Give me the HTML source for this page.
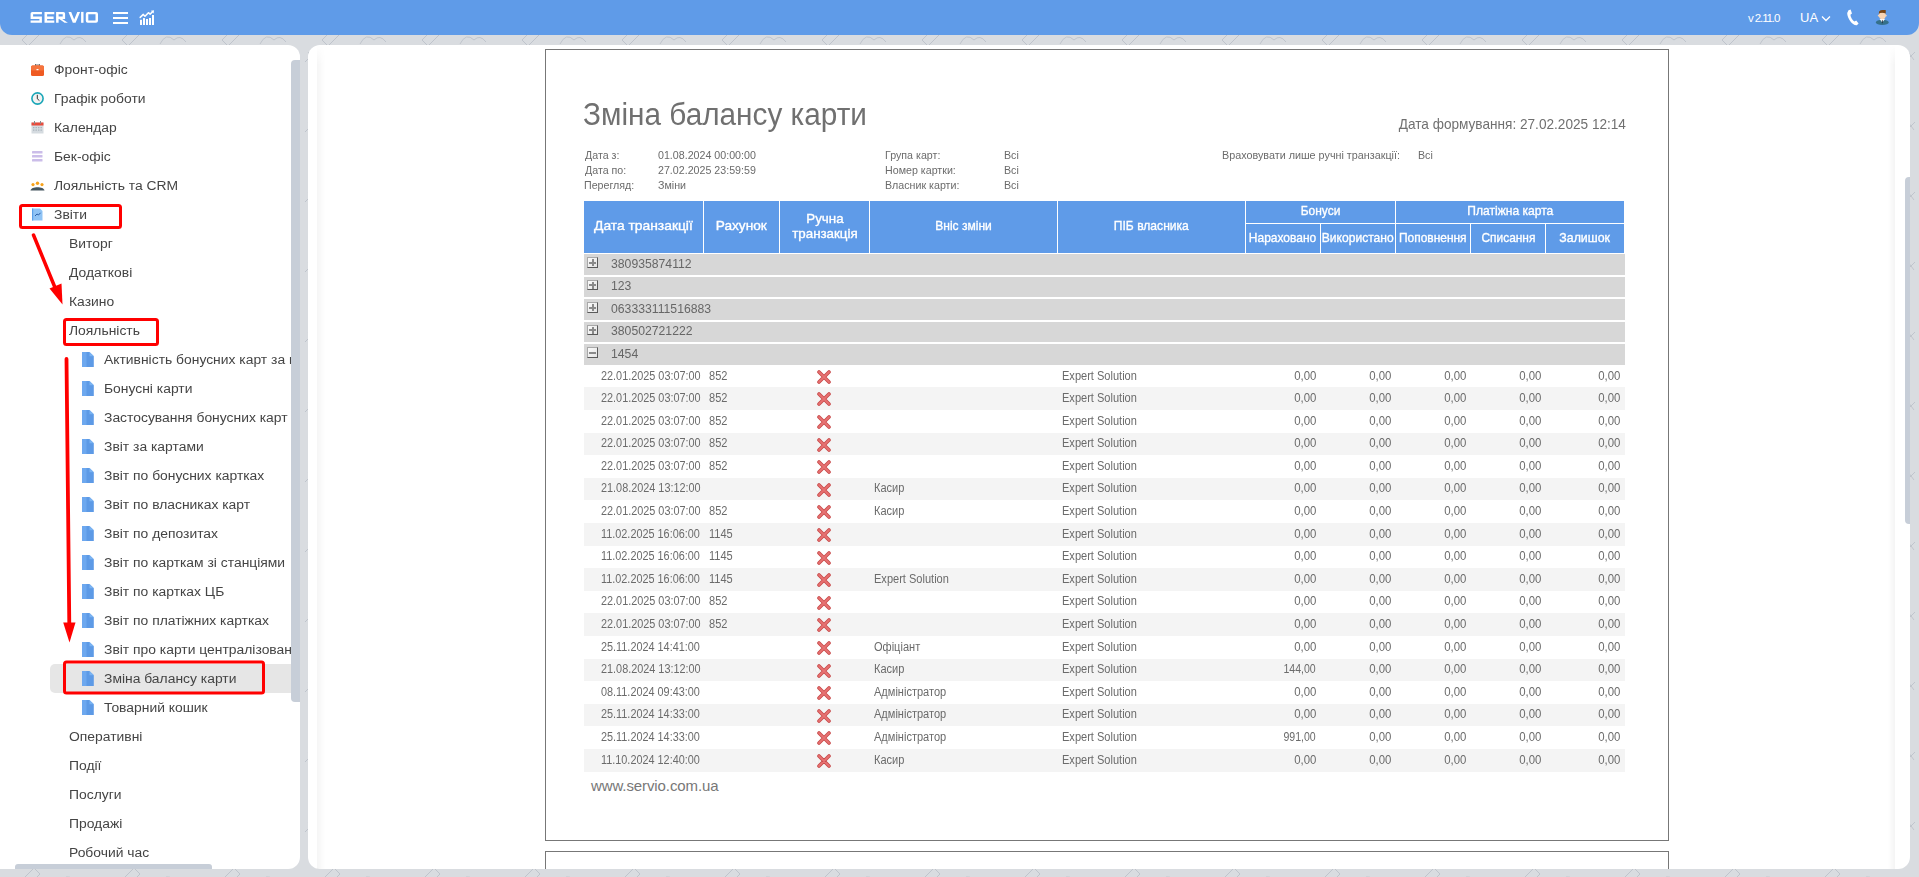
<!DOCTYPE html>
<html><head><meta charset="utf-8"><title>Servio</title>
<style>
*{box-sizing:border-box;margin:0;padding:0}
html,body{width:1919px;height:877px;overflow:hidden}
body{position:relative;background:#d9dce0;font-family:"Liberation Sans", sans-serif;}
.a{position:absolute}
.hdr{left:0;top:0;width:1919px;height:35px;background:#5f9be8;border-radius:0 0 12px 12px}
.side{left:0;top:45px;width:300px;height:824px;background:#fff;border-radius:0 12px 12px 0;overflow:hidden}
.main{left:308px;top:45px;width:1602px;height:824px;background:#fff;border-radius:12px;overflow:hidden}
.mi{position:absolute;height:29px;line-height:29px;font-size:12.5px;color:#444;transform:scaleX(1.11);transform-origin:left;white-space:nowrap}
.rt{position:absolute;white-space:nowrap;color:#6f6f6f}
.hc{position:absolute;background:#5f9be8;color:#fff;font-weight:normal;-webkit-text-stroke:0.35px #fff;font-size:13px;text-align:center;display:flex;align-items:center;justify-content:center;line-height:15px}
.hc span{display:inline-block;white-space:nowrap;position:relative;top:-1.5px}
.gr{position:absolute;left:584px;width:1041px;height:20.6px;background:#d7d7d7}
.dr{position:absolute;left:584px;width:1041px;height:22.6px}
.dt{position:absolute;font-size:12px;color:#6b6b6b;white-space:nowrap;line-height:14px}
</style></head><body>

<svg class="a" style="left:0;top:0" width="1919" height="877"><defs><pattern id="pt" x="0" y="0" width="100" height="70" patternUnits="userSpaceOnUse">
<g fill="none" stroke="#aab1bb" stroke-width="1" opacity="0.55">
<circle cx="28" cy="8" r="6"/><path d="M22 40 L34 28 L40 34 L28 46 Z"/><path d="M70 2 L82 14 M76 8 L86 -2"/><path d="M60 44 Q66 32 74 40 Q80 34 86 42"/><path d="M5 62 L15 52 M8 52 L14 60"/>
</g></pattern></defs><rect width="1919" height="877" fill="url(#pt)"/></svg>
<div class="a hdr"></div>
<svg class="a" style="left:0;top:0" width="110" height="35" viewBox="0 0 110 35"><g fill="#fff">
<path d="M32.3 11.9 L41.9 11.9 L41.9 14.3 L33.1 14.3 L33.1 16.4 L41.9 16.4 L41.9 22.8 L30.6 22.8 L30.6 20.4 L39.4 20.4 L39.4 18.9 L30.6 18.9 L30.6 13.6 Q30.6 11.9 32.3 11.9 Z"/>
<path d="M44.5 11.9 L54.3 11.9 L54.3 14.3 L47.1 14.3 L47.1 16.4 L53.6 16.4 L53.6 18.9 L47.1 18.9 L47.1 20.4 L54.3 20.4 L54.3 22.8 L44.5 22.8 Z"/>
<path d="M56.1 11.9 L63.4 11.9 Q65.1 11.9 65.1 13.6 L65.1 18.9 L62.2 18.9 L67.9 22.8 L64.6 22.8 L59.2 18.9 L58.6 18.9 L58.6 22.8 L56.1 22.8 Z M58.6 14.3 L58.6 16.4 L62.7 16.4 L62.7 14.3 Z"/>
<path d="M68.5 11.9 L71.2 11.9 L74.2 19.6 L77.3 11.9 L80.1 11.9 L75.6 22.8 L72.8 22.8 Z"/>
<rect x="81.1" y="11.9" width="2.4" height="10.9"/>
<path fill-rule="evenodd" d="M87.8 11.9 L96 11.9 Q98 11.9 98 13.9 L98 20.8 Q98 22.8 96 22.8 L87.8 22.8 Q85.8 22.8 85.8 20.8 L85.8 13.9 Q85.8 11.9 87.8 11.9 Z M88.3 14.3 L88.3 20.4 L95.5 20.4 L95.5 14.3 Z"/>
</g></svg>
<div class="a" style="left:113px;top:12px;width:15px;height:2px;background:#fff"></div>
<div class="a" style="left:113px;top:17px;width:15px;height:2px;background:#fff"></div>
<div class="a" style="left:113px;top:22px;width:15px;height:2px;background:#fff"></div>
<svg class="a" style="left:135px;top:5px" width="25" height="25" viewBox="0 0 25 25"><g fill="#fff">
<rect x="5" y="14.8" width="2" height="5.2"/><rect x="8" y="13.1" width="2" height="6.9"/><rect x="11" y="14" width="2" height="6"/><rect x="14" y="13" width="2" height="7"/><rect x="17" y="10" width="2" height="10"/>
<polygon points="19,5.2 15.8,5.8 18.6,8.6"/></g>
<polyline points="5.2,12.4 8.3,9.4 10,11.2 13.4,7.7 15.1,9.1 17.6,6.7" fill="none" stroke="#fff" stroke-width="1.5" stroke-linejoin="round" stroke-linecap="round"/></svg>
<div class="a" style="left:1748px;top:11px;font-size:11.5px;color:#fff;line-height:15px;letter-spacing:-1.1px">v 2.11.0</div>
<div class="a" style="left:1800px;top:10px;font-size:13px;color:#fff;line-height:16px">UA</div>
<svg class="a" style="left:1821px;top:15px" width="10" height="7" viewBox="0 0 10 7"><polyline points="1,1.5 5,5.5 9,1.5" fill="none" stroke="#fff" stroke-width="1.3"/></svg>
<svg class="a" style="left:1846px;top:9px" width="13" height="17" viewBox="0 0 13 17"><path d="M2.5 1.2 L4.6 0.6 L6 4.6 L4.4 5.8 C4.6 8.4 6.6 11.6 8.6 12.6 L10.2 11.4 L12.6 14.6 L10.8 16.2 C6.2 16.6 1.2 9 1.2 4 Z" fill="#fff"/></svg>
<svg class="a" style="left:1874px;top:9px" width="16" height="17" viewBox="0 0 16 17">
<ellipse cx="8.3" cy="13.4" rx="6.4" ry="2.6" fill="#35708a"/>
<path d="M5.6 10 L8.3 13.4 L11 10 Z" fill="#fff"/>
<rect x="7.9" y="11.2" width="0.9" height="3" fill="#1e2a3a"/>
<circle cx="4.7" cy="6.6" r="0.9" fill="#f8d4b4"/><circle cx="11.9" cy="6.6" r="0.9" fill="#f8d4b4"/>
<path d="M4.9 5 Q4.9 3.4 8.3 3.4 Q11.7 3.4 11.7 5 L11.7 7.4 Q11.5 9.6 8.3 10.6 Q5.1 9.6 4.9 7.4 Z" fill="#f8d4b4"/>
<path d="M4.8 5 L5.1 2.4 Q6.4 0.9 9 1 L11.7 1.1 L11.8 4.4 Q9 3.3 6 3.9 Z" fill="#7b4513"/>
</svg>
<div class="a side"></div>
<div class="a" style="left:0;top:0;width:291px;height:869px;overflow:hidden">
<div class="a" style="left:50px;top:664px;width:250px;height:29px;background:#e6e6e6;border-radius:5px 0 0 5px"></div>
<div class="mi" style="left:54.3px;top:56.1px">Фронт-офіс</div>
<svg class="a" style="left:31px;top:64px" width="13" height="12" viewBox="0 0 13 12"><rect x="4.5" y="0" width="4" height="2" fill="none" stroke="#555" stroke-width="0.8"/><rect x="0" y="1.5" width="13" height="10.5" rx="1.5" fill="#ef5a22"/><rect x="0" y="1.5" width="13" height="5" rx="1.5" fill="#f5743d"/><rect x="5.5" y="5" width="2" height="1.2" fill="#fff"/></svg>
<div class="mi" style="left:54.3px;top:85.1px">Графік роботи</div>
<svg class="a" style="left:31px;top:91.5px" width="13" height="13" viewBox="0 0 13 13"><circle cx="6.5" cy="6.5" r="5.6" fill="#f2f2f2" stroke="#1aa6b7" stroke-width="1.6"/><polyline points="6.3,2.8 6.3,6.8 8.4,8.6" fill="none" stroke="#333" stroke-width="1"/></svg>
<div class="mi" style="left:54.3px;top:114.1px">Календар</div>
<svg class="a" style="left:31px;top:120.5px" width="13" height="13" viewBox="0 0 13 13"><rect x="0.5" y="1.5" width="12" height="11" fill="#d5dbe0"/><rect x="0.5" y="1.5" width="12" height="3" fill="#e84c3d"/><rect x="3" y="0" width="1" height="3" fill="#888"/><rect x="9" y="0" width="1" height="3" fill="#888"/><g fill="#a9b3bb"><rect x="2" y="6" width="1.4" height="1.2"/><rect x="4.5" y="6" width="1.4" height="1.2"/><rect x="7" y="6" width="1.4" height="1.2"/><rect x="9.5" y="6" width="1.4" height="1.2"/><rect x="2" y="8.5" width="1.4" height="1.2"/><rect x="4.5" y="8.5" width="1.4" height="1.2"/><rect x="7" y="8.5" width="1.4" height="1.2"/><rect x="9.5" y="8.5" width="1.4" height="1.2"/></g></svg>
<div class="mi" style="left:54.3px;top:143.1px">Бек-офіс</div>
<svg class="a" style="left:32px;top:151px" width="11" height="11" viewBox="0 0 11 11"><rect x="0" y="0" width="10.5" height="2.6" rx="0.6" fill="#cbbde9"/><rect x="0" y="4" width="10.5" height="2.6" rx="0.6" fill="#cbbde9"/><rect x="0" y="8" width="10.5" height="2.6" rx="0.6" fill="#cbbde9"/></svg>
<div class="mi" style="left:54.3px;top:172.1px">Лояльність та CRM</div>
<svg class="a" style="left:30px;top:181px" width="15" height="10" viewBox="0 0 15 10"><path d="M0.5 9.5 C1 5 14 5 14.5 9.5 Z" fill="#44555f"/><circle cx="3" cy="3.6" r="1.6" fill="#f7a21b"/><circle cx="7.5" cy="2.2" r="1.7" fill="#f7a21b"/><circle cx="12" cy="3.6" r="1.6" fill="#f7a21b"/></svg>
<div class="mi" style="left:54.3px;top:201.1px">Звіти</div>
<svg class="a" style="left:32px;top:208px" width="11" height="13" viewBox="0 0 11 13"><path d="M0 0.5 L8 0.5 L10.5 3 L10.5 12.5 L0 12.5 Z" fill="#8fc3f5"/><rect x="0" y="0.5" width="1.2" height="12" fill="#5aa0ea"/><polyline points="3,8 5,6 6.5,7 8.5,4.8" fill="none" stroke="#2a5fa8" stroke-width="1"/></svg>
<div class="mi" style="left:69.3px;top:230.1px">Виторг</div>
<div class="mi" style="left:69.3px;top:259.1px">Додаткові</div>
<div class="mi" style="left:69.3px;top:288.1px">Казино</div>
<div class="mi" style="left:69.3px;top:317.1px">Лояльність</div>
<div class="mi" style="left:104.3px;top:346.1px">Активність бонусних карт за період</div>
<svg class="a" style="left:82px;top:352px" width="12" height="15" viewBox="0 0 12 15"><path d="M0 0 L7.5 0 L11.8 4.3 L11.8 15 L0 15 Z" fill="#5d9ae6"/><rect x="0" y="0" width="4.5" height="15" fill="#6da8ef"/><path d="M7.5 0 L11.8 4.3 L7.5 4.3 Z" fill="#7ab3f2"/></svg>
<div class="mi" style="left:104.3px;top:375.1px">Бонусні карти</div>
<svg class="a" style="left:82px;top:381px" width="12" height="15" viewBox="0 0 12 15"><path d="M0 0 L7.5 0 L11.8 4.3 L11.8 15 L0 15 Z" fill="#5d9ae6"/><rect x="0" y="0" width="4.5" height="15" fill="#6da8ef"/><path d="M7.5 0 L11.8 4.3 L7.5 4.3 Z" fill="#7ab3f2"/></svg>
<div class="mi" style="left:104.3px;top:404.1px">Застосування бонусних карт с</div>
<svg class="a" style="left:82px;top:410px" width="12" height="15" viewBox="0 0 12 15"><path d="M0 0 L7.5 0 L11.8 4.3 L11.8 15 L0 15 Z" fill="#5d9ae6"/><rect x="0" y="0" width="4.5" height="15" fill="#6da8ef"/><path d="M7.5 0 L11.8 4.3 L7.5 4.3 Z" fill="#7ab3f2"/></svg>
<div class="mi" style="left:104.3px;top:433.1px">Звіт за картами</div>
<svg class="a" style="left:82px;top:439px" width="12" height="15" viewBox="0 0 12 15"><path d="M0 0 L7.5 0 L11.8 4.3 L11.8 15 L0 15 Z" fill="#5d9ae6"/><rect x="0" y="0" width="4.5" height="15" fill="#6da8ef"/><path d="M7.5 0 L11.8 4.3 L7.5 4.3 Z" fill="#7ab3f2"/></svg>
<div class="mi" style="left:104.3px;top:462.1px">Звіт по бонусних картках</div>
<svg class="a" style="left:82px;top:468px" width="12" height="15" viewBox="0 0 12 15"><path d="M0 0 L7.5 0 L11.8 4.3 L11.8 15 L0 15 Z" fill="#5d9ae6"/><rect x="0" y="0" width="4.5" height="15" fill="#6da8ef"/><path d="M7.5 0 L11.8 4.3 L7.5 4.3 Z" fill="#7ab3f2"/></svg>
<div class="mi" style="left:104.3px;top:491.1px">Звіт по власниках карт</div>
<svg class="a" style="left:82px;top:497px" width="12" height="15" viewBox="0 0 12 15"><path d="M0 0 L7.5 0 L11.8 4.3 L11.8 15 L0 15 Z" fill="#5d9ae6"/><rect x="0" y="0" width="4.5" height="15" fill="#6da8ef"/><path d="M7.5 0 L11.8 4.3 L7.5 4.3 Z" fill="#7ab3f2"/></svg>
<div class="mi" style="left:104.3px;top:520.1px">Звіт по депозитах</div>
<svg class="a" style="left:82px;top:526px" width="12" height="15" viewBox="0 0 12 15"><path d="M0 0 L7.5 0 L11.8 4.3 L11.8 15 L0 15 Z" fill="#5d9ae6"/><rect x="0" y="0" width="4.5" height="15" fill="#6da8ef"/><path d="M7.5 0 L11.8 4.3 L7.5 4.3 Z" fill="#7ab3f2"/></svg>
<div class="mi" style="left:104.3px;top:549.1px">Звіт по карткам зі станціями</div>
<svg class="a" style="left:82px;top:555px" width="12" height="15" viewBox="0 0 12 15"><path d="M0 0 L7.5 0 L11.8 4.3 L11.8 15 L0 15 Z" fill="#5d9ae6"/><rect x="0" y="0" width="4.5" height="15" fill="#6da8ef"/><path d="M7.5 0 L11.8 4.3 L7.5 4.3 Z" fill="#7ab3f2"/></svg>
<div class="mi" style="left:104.3px;top:578.1px">Звіт по картках ЦБ</div>
<svg class="a" style="left:82px;top:584px" width="12" height="15" viewBox="0 0 12 15"><path d="M0 0 L7.5 0 L11.8 4.3 L11.8 15 L0 15 Z" fill="#5d9ae6"/><rect x="0" y="0" width="4.5" height="15" fill="#6da8ef"/><path d="M7.5 0 L11.8 4.3 L7.5 4.3 Z" fill="#7ab3f2"/></svg>
<div class="mi" style="left:104.3px;top:607.1px">Звіт по платіжних картках</div>
<svg class="a" style="left:82px;top:613px" width="12" height="15" viewBox="0 0 12 15"><path d="M0 0 L7.5 0 L11.8 4.3 L11.8 15 L0 15 Z" fill="#5d9ae6"/><rect x="0" y="0" width="4.5" height="15" fill="#6da8ef"/><path d="M7.5 0 L11.8 4.3 L7.5 4.3 Z" fill="#7ab3f2"/></svg>
<div class="mi" style="left:104.3px;top:636.1px">Звіт про карти централізованого</div>
<svg class="a" style="left:82px;top:642px" width="12" height="15" viewBox="0 0 12 15"><path d="M0 0 L7.5 0 L11.8 4.3 L11.8 15 L0 15 Z" fill="#5d9ae6"/><rect x="0" y="0" width="4.5" height="15" fill="#6da8ef"/><path d="M7.5 0 L11.8 4.3 L7.5 4.3 Z" fill="#7ab3f2"/></svg>
<div class="mi" style="left:104.3px;top:665.1px">Зміна балансу карти</div>
<svg class="a" style="left:82px;top:671px" width="12" height="15" viewBox="0 0 12 15"><path d="M0 0 L7.5 0 L11.8 4.3 L11.8 15 L0 15 Z" fill="#5d9ae6"/><rect x="0" y="0" width="4.5" height="15" fill="#6da8ef"/><path d="M7.5 0 L11.8 4.3 L7.5 4.3 Z" fill="#7ab3f2"/></svg>
<div class="mi" style="left:104.3px;top:694.1px">Товарний кошик</div>
<svg class="a" style="left:82px;top:700px" width="12" height="15" viewBox="0 0 12 15"><path d="M0 0 L7.5 0 L11.8 4.3 L11.8 15 L0 15 Z" fill="#5d9ae6"/><rect x="0" y="0" width="4.5" height="15" fill="#6da8ef"/><path d="M7.5 0 L11.8 4.3 L7.5 4.3 Z" fill="#7ab3f2"/></svg>
<div class="mi" style="left:69.3px;top:723.1px">Оперативні</div>
<div class="mi" style="left:69.3px;top:752.1px">Події</div>
<div class="mi" style="left:69.3px;top:781.1px">Послуги</div>
<div class="mi" style="left:69.3px;top:810.1px">Продажі</div>
<div class="mi" style="left:69.3px;top:839.1px">Робочий час</div>
</div>
<div class="a" style="left:291px;top:60px;width:9px;height:642px;background:#c7ced8;border-radius:4px 0 0 4px"></div>
<div class="a" style="left:15px;top:864px;width:197px;height:5px;background:#c7ced8;border-radius:3px 3px 0 0"></div>
<svg class="a" style="left:0;top:0" width="300" height="877" viewBox="0 0 300 877">
<g fill="none" stroke="#ff0000" stroke-width="3">
<rect x="20.5" y="205.5" width="100" height="22" rx="2"/>
<rect x="64.5" y="319.5" width="93" height="25" rx="2"/>
<rect x="64.5" y="662" width="199" height="31" rx="2"/>
</g>
<line x1="33.5" y1="235" x2="56" y2="290" stroke="#ff0000" stroke-width="3.5" stroke-linecap="round"/>
<polygon points="49.5,288.5 61.5,283.5 62.5,304.5" fill="#ff0000"/>
<line x1="66.5" y1="359" x2="69.3" y2="625" stroke="#ff0000" stroke-width="3.8" stroke-linecap="round"/>
<polygon points="63.2,622.5 75.5,622.5 69.5,642.5" fill="#ff0000"/>
</svg>
<div class="a main"></div>
<div class="a" style="left:317px;top:45px;width:8px;height:824px;background:linear-gradient(to right,rgba(0,0,0,0.04),rgba(0,0,0,0));-webkit-mask-image:linear-gradient(transparent,#000 20px)"></div>
<div class="a" style="left:1888px;top:45px;width:7px;height:824px;background:linear-gradient(to left,rgba(0,0,0,0.045),rgba(0,0,0,0));-webkit-mask-image:linear-gradient(transparent,#000 20px)"></div>
<div class="a" style="left:1905px;top:177px;width:5px;height:347px;background:#c7ced8;border-radius:4px 0 0 4px"></div>
<div class="a" style="left:545px;top:49px;width:1124px;height:792px;border:1px solid #777;background:#fff"></div>
<div class="a" style="left:545px;top:851px;width:1124px;height:18px;border:1px solid #777;border-bottom:none;background:#fff"></div>
<div class="rt" style="left:583px;top:98px;font-size:30.8px;line-height:34px;color:#707070;transform:scaleX(0.966);transform-origin:left">Зміна балансу карти</div>
<div class="rt" style="left:1325.5px;top:115.7px;font-size:14.8px;line-height:17px;color:#707070;width:300px;text-align:right"><span style="display:inline-block;transform:scaleX(0.92);transform-origin:right">Дата формування: 27.02.2025 12:14</span></div>
<div class="dt" style="left:585px;top:148px;transform:scaleX(0.92);transform-origin:left;font-size:11.6px;color:#6b6b6b">Дата з:</div>
<div class="dt" style="left:658px;top:148px;transform:scaleX(0.92);transform-origin:left;font-size:11.6px;color:#6b6b6b">01.08.2024 00:00:00</div>
<div class="dt" style="left:585px;top:163px;transform:scaleX(0.92);transform-origin:left;font-size:11.6px;color:#6b6b6b">Дата по:</div>
<div class="dt" style="left:658px;top:163px;transform:scaleX(0.92);transform-origin:left;font-size:11.6px;color:#6b6b6b">27.02.2025 23:59:59</div>
<div class="dt" style="left:584px;top:178px;transform:scaleX(0.92);transform-origin:left;font-size:11.6px;color:#6b6b6b">Перегляд:</div>
<div class="dt" style="left:658px;top:178px;transform:scaleX(0.92);transform-origin:left;font-size:11.6px;color:#6b6b6b">Зміни</div>
<div class="dt" style="left:885px;top:148px;transform:scaleX(0.92);transform-origin:left;font-size:11.6px">Група карт:</div>
<div class="dt" style="left:1004px;top:148px;transform:scaleX(0.92);transform-origin:left;font-size:11.6px">Всі</div>
<div class="dt" style="left:885px;top:163px;transform:scaleX(0.92);transform-origin:left;font-size:11.6px">Номер картки:</div>
<div class="dt" style="left:1004px;top:163px;transform:scaleX(0.92);transform-origin:left;font-size:11.6px">Всі</div>
<div class="dt" style="left:885px;top:178px;transform:scaleX(0.92);transform-origin:left;font-size:11.6px">Власник карти:</div>
<div class="dt" style="left:1004px;top:178px;transform:scaleX(0.92);transform-origin:left;font-size:11.6px">Всі</div>
<div class="dt" style="left:1222px;top:148px;transform:scaleX(0.93);transform-origin:left;font-size:11.6px">Враховувати лише ручні транзакції:</div>
<div class="dt" style="left:1418px;top:148px;transform:scaleX(0.92);transform-origin:left;font-size:11.6px">Всі</div>
<div class="hc" style="left:584px;top:201px;width:119px;height:52px"><span style="transform:scaleX(1.064)">Дата транзакції</span></div>
<div class="hc" style="left:704px;top:201px;width:75px;height:52px"><span style="transform:scaleX(1.05)">Рахунок</span></div>
<div class="hc" style="left:780px;top:201px;width:89px;height:52px"><span style="transform:scaleX(1.025)">Ручна<br>транзакція</span></div>
<div class="hc" style="left:870px;top:201px;width:187px;height:52px"><span style="transform:scaleX(0.925)">Вніс зміни</span></div>
<div class="hc" style="left:1058px;top:201px;width:187px;height:52px"><span style="transform:scaleX(0.93)">ПІБ власника</span></div>
<div class="hc" style="left:1246px;top:201px;width:149px;height:22px"><span style="transform:scaleX(0.92)">Бонуси</span></div>
<div class="hc" style="left:1396px;top:201px;width:228px;height:22px"><span style="transform:scaleX(0.929)">Платіжна карта</span></div>
<div class="hc" style="left:1246px;top:224px;width:74px;height:29px"><span style="transform:scaleX(0.922)">Нараховано</span></div>
<div class="hc" style="left:1321px;top:224px;width:74px;height:29px"><span style="transform:scaleX(0.93)">Використано</span></div>
<div class="hc" style="left:1396px;top:224px;width:74px;height:29px"><span style="transform:scaleX(0.918)">Поповнення</span></div>
<div class="hc" style="left:1471px;top:224px;width:74px;height:29px"><span style="transform:scaleX(0.918)">Списання</span></div>
<div class="hc" style="left:1546px;top:224px;width:78px;height:29px"><span style="transform:scaleX(0.95)">Залишок</span></div>
<div class="gr" style="top:254.0px"></div>
<div class="a" style="left:587px;top:257.0px;width:10.5px;height:10.5px;background:linear-gradient(135deg,#fafafa,#e4e4e4);border:1px solid #a8a8a8;border-right-color:#5a5a5a;border-bottom-color:#5a5a5a"></div>
<div class="a" style="left:589px;top:261.5px;width:7px;height:2px;background:#8a8a8a"></div>
<div class="a" style="left:591.5px;top:259.0px;width:2px;height:7px;background:#8a8a8a"></div>
<div class="dt" style="left:611px;top:256.5px;font-size:12.6px;color:#666;transform:scaleX(0.97);transform-origin:left">380935874112</div>
<div class="gr" style="top:276.5px"></div>
<div class="a" style="left:587px;top:279.5px;width:10.5px;height:10.5px;background:linear-gradient(135deg,#fafafa,#e4e4e4);border:1px solid #a8a8a8;border-right-color:#5a5a5a;border-bottom-color:#5a5a5a"></div>
<div class="a" style="left:589px;top:284.0px;width:7px;height:2px;background:#8a8a8a"></div>
<div class="a" style="left:591.5px;top:281.5px;width:2px;height:7px;background:#8a8a8a"></div>
<div class="dt" style="left:611px;top:279.0px;font-size:12.6px;color:#666;transform:scaleX(0.97);transform-origin:left">123</div>
<div class="gr" style="top:299.0px"></div>
<div class="a" style="left:587px;top:302.0px;width:10.5px;height:10.5px;background:linear-gradient(135deg,#fafafa,#e4e4e4);border:1px solid #a8a8a8;border-right-color:#5a5a5a;border-bottom-color:#5a5a5a"></div>
<div class="a" style="left:589px;top:306.5px;width:7px;height:2px;background:#8a8a8a"></div>
<div class="a" style="left:591.5px;top:304.0px;width:2px;height:7px;background:#8a8a8a"></div>
<div class="dt" style="left:611px;top:301.5px;font-size:12.6px;color:#666;transform:scaleX(0.97);transform-origin:left">063333111516883</div>
<div class="gr" style="top:321.5px"></div>
<div class="a" style="left:587px;top:324.5px;width:10.5px;height:10.5px;background:linear-gradient(135deg,#fafafa,#e4e4e4);border:1px solid #a8a8a8;border-right-color:#5a5a5a;border-bottom-color:#5a5a5a"></div>
<div class="a" style="left:589px;top:329.0px;width:7px;height:2px;background:#8a8a8a"></div>
<div class="a" style="left:591.5px;top:326.5px;width:2px;height:7px;background:#8a8a8a"></div>
<div class="dt" style="left:611px;top:324.0px;font-size:12.6px;color:#666;transform:scaleX(0.97);transform-origin:left">380502721222</div>
<div class="gr" style="top:344.0px"></div>
<div class="a" style="left:587px;top:347.0px;width:10.5px;height:10.5px;background:linear-gradient(135deg,#fafafa,#e4e4e4);border:1px solid #a8a8a8;border-right-color:#5a5a5a;border-bottom-color:#5a5a5a"></div>
<div class="a" style="left:589px;top:351.5px;width:7px;height:2px;background:#8a8a8a"></div>
<div class="dt" style="left:611px;top:346.5px;font-size:12.6px;color:#666;transform:scaleX(0.97);transform-origin:left">1454</div>
<div class="dt" style="left:600.5px;top:368.50px;transform:scaleX(0.905);transform-origin:left;">22.01.2025 03:07:00</div>
<div class="dt" style="left:708.6px;top:368.50px;transform:scaleX(0.92);transform-origin:left;">852</div>
<svg class="a" style="left:817px;top:369.90px" width="14" height="14" viewBox="0 0 14 14"><g stroke-linecap="round"><path d="M2 2 L12 12 M12 2 L2 12" stroke="#c84a4a" stroke-width="3.6"/><path d="M2 2 L12 12 M12 2 L2 12" stroke="#e77272" stroke-width="1.8"/></g></svg>
<div class="dt" style="left:1062px;top:368.50px;transform:scaleX(0.92);transform-origin:left;">Expert Solution</div>
<div class="dt" style="left:1016.0px;width:300px;top:368.50px;text-align:right;"><span style="display:inline-block;transform:scaleX(0.95);transform-origin:right">0,00</span></div>
<div class="dt" style="left:1091.0px;width:300px;top:368.50px;text-align:right;"><span style="display:inline-block;transform:scaleX(0.95);transform-origin:right">0,00</span></div>
<div class="dt" style="left:1166.5px;width:300px;top:368.50px;text-align:right;"><span style="display:inline-block;transform:scaleX(0.95);transform-origin:right">0,00</span></div>
<div class="dt" style="left:1241.5px;width:300px;top:368.50px;text-align:right;"><span style="display:inline-block;transform:scaleX(0.95);transform-origin:right">0,00</span></div>
<div class="dt" style="left:1320.5px;width:300px;top:368.50px;text-align:right;"><span style="display:inline-block;transform:scaleX(0.95);transform-origin:right">0,00</span></div>
<div class="dr" style="top:387.49px;background:#f4f4f4"></div>
<div class="dt" style="left:600.5px;top:391.09px;transform:scaleX(0.905);transform-origin:left;">22.01.2025 03:07:00</div>
<div class="dt" style="left:708.6px;top:391.09px;transform:scaleX(0.92);transform-origin:left;">852</div>
<svg class="a" style="left:817px;top:392.49px" width="14" height="14" viewBox="0 0 14 14"><g stroke-linecap="round"><path d="M2 2 L12 12 M12 2 L2 12" stroke="#c84a4a" stroke-width="3.6"/><path d="M2 2 L12 12 M12 2 L2 12" stroke="#e77272" stroke-width="1.8"/></g></svg>
<div class="dt" style="left:1062px;top:391.09px;transform:scaleX(0.92);transform-origin:left;">Expert Solution</div>
<div class="dt" style="left:1016.0px;width:300px;top:391.09px;text-align:right;"><span style="display:inline-block;transform:scaleX(0.95);transform-origin:right">0,00</span></div>
<div class="dt" style="left:1091.0px;width:300px;top:391.09px;text-align:right;"><span style="display:inline-block;transform:scaleX(0.95);transform-origin:right">0,00</span></div>
<div class="dt" style="left:1166.5px;width:300px;top:391.09px;text-align:right;"><span style="display:inline-block;transform:scaleX(0.95);transform-origin:right">0,00</span></div>
<div class="dt" style="left:1241.5px;width:300px;top:391.09px;text-align:right;"><span style="display:inline-block;transform:scaleX(0.95);transform-origin:right">0,00</span></div>
<div class="dt" style="left:1320.5px;width:300px;top:391.09px;text-align:right;"><span style="display:inline-block;transform:scaleX(0.95);transform-origin:right">0,00</span></div>
<div class="dt" style="left:600.5px;top:413.68px;transform:scaleX(0.905);transform-origin:left;">22.01.2025 03:07:00</div>
<div class="dt" style="left:708.6px;top:413.68px;transform:scaleX(0.92);transform-origin:left;">852</div>
<svg class="a" style="left:817px;top:415.08px" width="14" height="14" viewBox="0 0 14 14"><g stroke-linecap="round"><path d="M2 2 L12 12 M12 2 L2 12" stroke="#c84a4a" stroke-width="3.6"/><path d="M2 2 L12 12 M12 2 L2 12" stroke="#e77272" stroke-width="1.8"/></g></svg>
<div class="dt" style="left:1062px;top:413.68px;transform:scaleX(0.92);transform-origin:left;">Expert Solution</div>
<div class="dt" style="left:1016.0px;width:300px;top:413.68px;text-align:right;"><span style="display:inline-block;transform:scaleX(0.95);transform-origin:right">0,00</span></div>
<div class="dt" style="left:1091.0px;width:300px;top:413.68px;text-align:right;"><span style="display:inline-block;transform:scaleX(0.95);transform-origin:right">0,00</span></div>
<div class="dt" style="left:1166.5px;width:300px;top:413.68px;text-align:right;"><span style="display:inline-block;transform:scaleX(0.95);transform-origin:right">0,00</span></div>
<div class="dt" style="left:1241.5px;width:300px;top:413.68px;text-align:right;"><span style="display:inline-block;transform:scaleX(0.95);transform-origin:right">0,00</span></div>
<div class="dt" style="left:1320.5px;width:300px;top:413.68px;text-align:right;"><span style="display:inline-block;transform:scaleX(0.95);transform-origin:right">0,00</span></div>
<div class="dr" style="top:432.67px;background:#f4f4f4"></div>
<div class="dt" style="left:600.5px;top:436.27px;transform:scaleX(0.905);transform-origin:left;">22.01.2025 03:07:00</div>
<div class="dt" style="left:708.6px;top:436.27px;transform:scaleX(0.92);transform-origin:left;">852</div>
<svg class="a" style="left:817px;top:437.67px" width="14" height="14" viewBox="0 0 14 14"><g stroke-linecap="round"><path d="M2 2 L12 12 M12 2 L2 12" stroke="#c84a4a" stroke-width="3.6"/><path d="M2 2 L12 12 M12 2 L2 12" stroke="#e77272" stroke-width="1.8"/></g></svg>
<div class="dt" style="left:1062px;top:436.27px;transform:scaleX(0.92);transform-origin:left;">Expert Solution</div>
<div class="dt" style="left:1016.0px;width:300px;top:436.27px;text-align:right;"><span style="display:inline-block;transform:scaleX(0.95);transform-origin:right">0,00</span></div>
<div class="dt" style="left:1091.0px;width:300px;top:436.27px;text-align:right;"><span style="display:inline-block;transform:scaleX(0.95);transform-origin:right">0,00</span></div>
<div class="dt" style="left:1166.5px;width:300px;top:436.27px;text-align:right;"><span style="display:inline-block;transform:scaleX(0.95);transform-origin:right">0,00</span></div>
<div class="dt" style="left:1241.5px;width:300px;top:436.27px;text-align:right;"><span style="display:inline-block;transform:scaleX(0.95);transform-origin:right">0,00</span></div>
<div class="dt" style="left:1320.5px;width:300px;top:436.27px;text-align:right;"><span style="display:inline-block;transform:scaleX(0.95);transform-origin:right">0,00</span></div>
<div class="dt" style="left:600.5px;top:458.86px;transform:scaleX(0.905);transform-origin:left;">22.01.2025 03:07:00</div>
<div class="dt" style="left:708.6px;top:458.86px;transform:scaleX(0.92);transform-origin:left;">852</div>
<svg class="a" style="left:817px;top:460.26px" width="14" height="14" viewBox="0 0 14 14"><g stroke-linecap="round"><path d="M2 2 L12 12 M12 2 L2 12" stroke="#c84a4a" stroke-width="3.6"/><path d="M2 2 L12 12 M12 2 L2 12" stroke="#e77272" stroke-width="1.8"/></g></svg>
<div class="dt" style="left:1062px;top:458.86px;transform:scaleX(0.92);transform-origin:left;">Expert Solution</div>
<div class="dt" style="left:1016.0px;width:300px;top:458.86px;text-align:right;"><span style="display:inline-block;transform:scaleX(0.95);transform-origin:right">0,00</span></div>
<div class="dt" style="left:1091.0px;width:300px;top:458.86px;text-align:right;"><span style="display:inline-block;transform:scaleX(0.95);transform-origin:right">0,00</span></div>
<div class="dt" style="left:1166.5px;width:300px;top:458.86px;text-align:right;"><span style="display:inline-block;transform:scaleX(0.95);transform-origin:right">0,00</span></div>
<div class="dt" style="left:1241.5px;width:300px;top:458.86px;text-align:right;"><span style="display:inline-block;transform:scaleX(0.95);transform-origin:right">0,00</span></div>
<div class="dt" style="left:1320.5px;width:300px;top:458.86px;text-align:right;"><span style="display:inline-block;transform:scaleX(0.95);transform-origin:right">0,00</span></div>
<div class="dr" style="top:477.85px;background:#f4f4f4"></div>
<div class="dt" style="left:600.5px;top:481.45px;transform:scaleX(0.905);transform-origin:left;">21.08.2024 13:12:00</div>
<svg class="a" style="left:817px;top:482.85px" width="14" height="14" viewBox="0 0 14 14"><g stroke-linecap="round"><path d="M2 2 L12 12 M12 2 L2 12" stroke="#c84a4a" stroke-width="3.6"/><path d="M2 2 L12 12 M12 2 L2 12" stroke="#e77272" stroke-width="1.8"/></g></svg>
<div class="dt" style="left:874px;top:481.45px;transform:scaleX(0.92);transform-origin:left;">Касир</div>
<div class="dt" style="left:1062px;top:481.45px;transform:scaleX(0.92);transform-origin:left;">Expert Solution</div>
<div class="dt" style="left:1016.0px;width:300px;top:481.45px;text-align:right;"><span style="display:inline-block;transform:scaleX(0.95);transform-origin:right">0,00</span></div>
<div class="dt" style="left:1091.0px;width:300px;top:481.45px;text-align:right;"><span style="display:inline-block;transform:scaleX(0.95);transform-origin:right">0,00</span></div>
<div class="dt" style="left:1166.5px;width:300px;top:481.45px;text-align:right;"><span style="display:inline-block;transform:scaleX(0.95);transform-origin:right">0,00</span></div>
<div class="dt" style="left:1241.5px;width:300px;top:481.45px;text-align:right;"><span style="display:inline-block;transform:scaleX(0.95);transform-origin:right">0,00</span></div>
<div class="dt" style="left:1320.5px;width:300px;top:481.45px;text-align:right;"><span style="display:inline-block;transform:scaleX(0.95);transform-origin:right">0,00</span></div>
<div class="dt" style="left:600.5px;top:504.04px;transform:scaleX(0.905);transform-origin:left;">22.01.2025 03:07:00</div>
<div class="dt" style="left:708.6px;top:504.04px;transform:scaleX(0.92);transform-origin:left;">852</div>
<svg class="a" style="left:817px;top:505.44px" width="14" height="14" viewBox="0 0 14 14"><g stroke-linecap="round"><path d="M2 2 L12 12 M12 2 L2 12" stroke="#c84a4a" stroke-width="3.6"/><path d="M2 2 L12 12 M12 2 L2 12" stroke="#e77272" stroke-width="1.8"/></g></svg>
<div class="dt" style="left:874px;top:504.04px;transform:scaleX(0.92);transform-origin:left;">Касир</div>
<div class="dt" style="left:1062px;top:504.04px;transform:scaleX(0.92);transform-origin:left;">Expert Solution</div>
<div class="dt" style="left:1016.0px;width:300px;top:504.04px;text-align:right;"><span style="display:inline-block;transform:scaleX(0.95);transform-origin:right">0,00</span></div>
<div class="dt" style="left:1091.0px;width:300px;top:504.04px;text-align:right;"><span style="display:inline-block;transform:scaleX(0.95);transform-origin:right">0,00</span></div>
<div class="dt" style="left:1166.5px;width:300px;top:504.04px;text-align:right;"><span style="display:inline-block;transform:scaleX(0.95);transform-origin:right">0,00</span></div>
<div class="dt" style="left:1241.5px;width:300px;top:504.04px;text-align:right;"><span style="display:inline-block;transform:scaleX(0.95);transform-origin:right">0,00</span></div>
<div class="dt" style="left:1320.5px;width:300px;top:504.04px;text-align:right;"><span style="display:inline-block;transform:scaleX(0.95);transform-origin:right">0,00</span></div>
<div class="dr" style="top:523.03px;background:#f4f4f4"></div>
<div class="dt" style="left:600.5px;top:526.63px;transform:scaleX(0.905);transform-origin:left;">11.02.2025 16:06:00</div>
<div class="dt" style="left:708.6px;top:526.63px;transform:scaleX(0.92);transform-origin:left;">1145</div>
<svg class="a" style="left:817px;top:528.03px" width="14" height="14" viewBox="0 0 14 14"><g stroke-linecap="round"><path d="M2 2 L12 12 M12 2 L2 12" stroke="#c84a4a" stroke-width="3.6"/><path d="M2 2 L12 12 M12 2 L2 12" stroke="#e77272" stroke-width="1.8"/></g></svg>
<div class="dt" style="left:1062px;top:526.63px;transform:scaleX(0.92);transform-origin:left;">Expert Solution</div>
<div class="dt" style="left:1016.0px;width:300px;top:526.63px;text-align:right;"><span style="display:inline-block;transform:scaleX(0.95);transform-origin:right">0,00</span></div>
<div class="dt" style="left:1091.0px;width:300px;top:526.63px;text-align:right;"><span style="display:inline-block;transform:scaleX(0.95);transform-origin:right">0,00</span></div>
<div class="dt" style="left:1166.5px;width:300px;top:526.63px;text-align:right;"><span style="display:inline-block;transform:scaleX(0.95);transform-origin:right">0,00</span></div>
<div class="dt" style="left:1241.5px;width:300px;top:526.63px;text-align:right;"><span style="display:inline-block;transform:scaleX(0.95);transform-origin:right">0,00</span></div>
<div class="dt" style="left:1320.5px;width:300px;top:526.63px;text-align:right;"><span style="display:inline-block;transform:scaleX(0.95);transform-origin:right">0,00</span></div>
<div class="dt" style="left:600.5px;top:549.22px;transform:scaleX(0.905);transform-origin:left;">11.02.2025 16:06:00</div>
<div class="dt" style="left:708.6px;top:549.22px;transform:scaleX(0.92);transform-origin:left;">1145</div>
<svg class="a" style="left:817px;top:550.62px" width="14" height="14" viewBox="0 0 14 14"><g stroke-linecap="round"><path d="M2 2 L12 12 M12 2 L2 12" stroke="#c84a4a" stroke-width="3.6"/><path d="M2 2 L12 12 M12 2 L2 12" stroke="#e77272" stroke-width="1.8"/></g></svg>
<div class="dt" style="left:1062px;top:549.22px;transform:scaleX(0.92);transform-origin:left;">Expert Solution</div>
<div class="dt" style="left:1016.0px;width:300px;top:549.22px;text-align:right;"><span style="display:inline-block;transform:scaleX(0.95);transform-origin:right">0,00</span></div>
<div class="dt" style="left:1091.0px;width:300px;top:549.22px;text-align:right;"><span style="display:inline-block;transform:scaleX(0.95);transform-origin:right">0,00</span></div>
<div class="dt" style="left:1166.5px;width:300px;top:549.22px;text-align:right;"><span style="display:inline-block;transform:scaleX(0.95);transform-origin:right">0,00</span></div>
<div class="dt" style="left:1241.5px;width:300px;top:549.22px;text-align:right;"><span style="display:inline-block;transform:scaleX(0.95);transform-origin:right">0,00</span></div>
<div class="dt" style="left:1320.5px;width:300px;top:549.22px;text-align:right;"><span style="display:inline-block;transform:scaleX(0.95);transform-origin:right">0,00</span></div>
<div class="dr" style="top:568.21px;background:#f4f4f4"></div>
<div class="dt" style="left:600.5px;top:571.81px;transform:scaleX(0.905);transform-origin:left;">11.02.2025 16:06:00</div>
<div class="dt" style="left:708.6px;top:571.81px;transform:scaleX(0.92);transform-origin:left;">1145</div>
<svg class="a" style="left:817px;top:573.21px" width="14" height="14" viewBox="0 0 14 14"><g stroke-linecap="round"><path d="M2 2 L12 12 M12 2 L2 12" stroke="#c84a4a" stroke-width="3.6"/><path d="M2 2 L12 12 M12 2 L2 12" stroke="#e77272" stroke-width="1.8"/></g></svg>
<div class="dt" style="left:874px;top:571.81px;transform:scaleX(0.92);transform-origin:left;">Expert Solution</div>
<div class="dt" style="left:1062px;top:571.81px;transform:scaleX(0.92);transform-origin:left;">Expert Solution</div>
<div class="dt" style="left:1016.0px;width:300px;top:571.81px;text-align:right;"><span style="display:inline-block;transform:scaleX(0.95);transform-origin:right">0,00</span></div>
<div class="dt" style="left:1091.0px;width:300px;top:571.81px;text-align:right;"><span style="display:inline-block;transform:scaleX(0.95);transform-origin:right">0,00</span></div>
<div class="dt" style="left:1166.5px;width:300px;top:571.81px;text-align:right;"><span style="display:inline-block;transform:scaleX(0.95);transform-origin:right">0,00</span></div>
<div class="dt" style="left:1241.5px;width:300px;top:571.81px;text-align:right;"><span style="display:inline-block;transform:scaleX(0.95);transform-origin:right">0,00</span></div>
<div class="dt" style="left:1320.5px;width:300px;top:571.81px;text-align:right;"><span style="display:inline-block;transform:scaleX(0.95);transform-origin:right">0,00</span></div>
<div class="dt" style="left:600.5px;top:594.40px;transform:scaleX(0.905);transform-origin:left;">22.01.2025 03:07:00</div>
<div class="dt" style="left:708.6px;top:594.40px;transform:scaleX(0.92);transform-origin:left;">852</div>
<svg class="a" style="left:817px;top:595.80px" width="14" height="14" viewBox="0 0 14 14"><g stroke-linecap="round"><path d="M2 2 L12 12 M12 2 L2 12" stroke="#c84a4a" stroke-width="3.6"/><path d="M2 2 L12 12 M12 2 L2 12" stroke="#e77272" stroke-width="1.8"/></g></svg>
<div class="dt" style="left:1062px;top:594.40px;transform:scaleX(0.92);transform-origin:left;">Expert Solution</div>
<div class="dt" style="left:1016.0px;width:300px;top:594.40px;text-align:right;"><span style="display:inline-block;transform:scaleX(0.95);transform-origin:right">0,00</span></div>
<div class="dt" style="left:1091.0px;width:300px;top:594.40px;text-align:right;"><span style="display:inline-block;transform:scaleX(0.95);transform-origin:right">0,00</span></div>
<div class="dt" style="left:1166.5px;width:300px;top:594.40px;text-align:right;"><span style="display:inline-block;transform:scaleX(0.95);transform-origin:right">0,00</span></div>
<div class="dt" style="left:1241.5px;width:300px;top:594.40px;text-align:right;"><span style="display:inline-block;transform:scaleX(0.95);transform-origin:right">0,00</span></div>
<div class="dt" style="left:1320.5px;width:300px;top:594.40px;text-align:right;"><span style="display:inline-block;transform:scaleX(0.95);transform-origin:right">0,00</span></div>
<div class="dr" style="top:613.39px;background:#f4f4f4"></div>
<div class="dt" style="left:600.5px;top:616.99px;transform:scaleX(0.905);transform-origin:left;">22.01.2025 03:07:00</div>
<div class="dt" style="left:708.6px;top:616.99px;transform:scaleX(0.92);transform-origin:left;">852</div>
<svg class="a" style="left:817px;top:618.39px" width="14" height="14" viewBox="0 0 14 14"><g stroke-linecap="round"><path d="M2 2 L12 12 M12 2 L2 12" stroke="#c84a4a" stroke-width="3.6"/><path d="M2 2 L12 12 M12 2 L2 12" stroke="#e77272" stroke-width="1.8"/></g></svg>
<div class="dt" style="left:1062px;top:616.99px;transform:scaleX(0.92);transform-origin:left;">Expert Solution</div>
<div class="dt" style="left:1016.0px;width:300px;top:616.99px;text-align:right;"><span style="display:inline-block;transform:scaleX(0.95);transform-origin:right">0,00</span></div>
<div class="dt" style="left:1091.0px;width:300px;top:616.99px;text-align:right;"><span style="display:inline-block;transform:scaleX(0.95);transform-origin:right">0,00</span></div>
<div class="dt" style="left:1166.5px;width:300px;top:616.99px;text-align:right;"><span style="display:inline-block;transform:scaleX(0.95);transform-origin:right">0,00</span></div>
<div class="dt" style="left:1241.5px;width:300px;top:616.99px;text-align:right;"><span style="display:inline-block;transform:scaleX(0.95);transform-origin:right">0,00</span></div>
<div class="dt" style="left:1320.5px;width:300px;top:616.99px;text-align:right;"><span style="display:inline-block;transform:scaleX(0.95);transform-origin:right">0,00</span></div>
<div class="dt" style="left:600.5px;top:639.58px;transform:scaleX(0.905);transform-origin:left;">25.11.2024 14:41:00</div>
<svg class="a" style="left:817px;top:640.98px" width="14" height="14" viewBox="0 0 14 14"><g stroke-linecap="round"><path d="M2 2 L12 12 M12 2 L2 12" stroke="#c84a4a" stroke-width="3.6"/><path d="M2 2 L12 12 M12 2 L2 12" stroke="#e77272" stroke-width="1.8"/></g></svg>
<div class="dt" style="left:874px;top:639.58px;transform:scaleX(0.92);transform-origin:left;">Офіціант</div>
<div class="dt" style="left:1062px;top:639.58px;transform:scaleX(0.92);transform-origin:left;">Expert Solution</div>
<div class="dt" style="left:1016.0px;width:300px;top:639.58px;text-align:right;"><span style="display:inline-block;transform:scaleX(0.95);transform-origin:right">0,00</span></div>
<div class="dt" style="left:1091.0px;width:300px;top:639.58px;text-align:right;"><span style="display:inline-block;transform:scaleX(0.95);transform-origin:right">0,00</span></div>
<div class="dt" style="left:1166.5px;width:300px;top:639.58px;text-align:right;"><span style="display:inline-block;transform:scaleX(0.95);transform-origin:right">0,00</span></div>
<div class="dt" style="left:1241.5px;width:300px;top:639.58px;text-align:right;"><span style="display:inline-block;transform:scaleX(0.95);transform-origin:right">0,00</span></div>
<div class="dt" style="left:1320.5px;width:300px;top:639.58px;text-align:right;"><span style="display:inline-block;transform:scaleX(0.95);transform-origin:right">0,00</span></div>
<div class="dr" style="top:658.57px;background:#f4f4f4"></div>
<div class="dt" style="left:600.5px;top:662.17px;transform:scaleX(0.905);transform-origin:left;">21.08.2024 13:12:00</div>
<svg class="a" style="left:817px;top:663.57px" width="14" height="14" viewBox="0 0 14 14"><g stroke-linecap="round"><path d="M2 2 L12 12 M12 2 L2 12" stroke="#c84a4a" stroke-width="3.6"/><path d="M2 2 L12 12 M12 2 L2 12" stroke="#e77272" stroke-width="1.8"/></g></svg>
<div class="dt" style="left:874px;top:662.17px;transform:scaleX(0.92);transform-origin:left;">Касир</div>
<div class="dt" style="left:1062px;top:662.17px;transform:scaleX(0.92);transform-origin:left;">Expert Solution</div>
<div class="dt" style="left:1016.0px;width:300px;top:662.17px;text-align:right;"><span style="display:inline-block;transform:scaleX(0.88);transform-origin:right">144,00</span></div>
<div class="dt" style="left:1091.0px;width:300px;top:662.17px;text-align:right;"><span style="display:inline-block;transform:scaleX(0.95);transform-origin:right">0,00</span></div>
<div class="dt" style="left:1166.5px;width:300px;top:662.17px;text-align:right;"><span style="display:inline-block;transform:scaleX(0.95);transform-origin:right">0,00</span></div>
<div class="dt" style="left:1241.5px;width:300px;top:662.17px;text-align:right;"><span style="display:inline-block;transform:scaleX(0.95);transform-origin:right">0,00</span></div>
<div class="dt" style="left:1320.5px;width:300px;top:662.17px;text-align:right;"><span style="display:inline-block;transform:scaleX(0.95);transform-origin:right">0,00</span></div>
<div class="dt" style="left:600.5px;top:684.76px;transform:scaleX(0.905);transform-origin:left;">08.11.2024 09:43:00</div>
<svg class="a" style="left:817px;top:686.16px" width="14" height="14" viewBox="0 0 14 14"><g stroke-linecap="round"><path d="M2 2 L12 12 M12 2 L2 12" stroke="#c84a4a" stroke-width="3.6"/><path d="M2 2 L12 12 M12 2 L2 12" stroke="#e77272" stroke-width="1.8"/></g></svg>
<div class="dt" style="left:874px;top:684.76px;transform:scaleX(0.92);transform-origin:left;">Адміністратор</div>
<div class="dt" style="left:1062px;top:684.76px;transform:scaleX(0.92);transform-origin:left;">Expert Solution</div>
<div class="dt" style="left:1016.0px;width:300px;top:684.76px;text-align:right;"><span style="display:inline-block;transform:scaleX(0.95);transform-origin:right">0,00</span></div>
<div class="dt" style="left:1091.0px;width:300px;top:684.76px;text-align:right;"><span style="display:inline-block;transform:scaleX(0.95);transform-origin:right">0,00</span></div>
<div class="dt" style="left:1166.5px;width:300px;top:684.76px;text-align:right;"><span style="display:inline-block;transform:scaleX(0.95);transform-origin:right">0,00</span></div>
<div class="dt" style="left:1241.5px;width:300px;top:684.76px;text-align:right;"><span style="display:inline-block;transform:scaleX(0.95);transform-origin:right">0,00</span></div>
<div class="dt" style="left:1320.5px;width:300px;top:684.76px;text-align:right;"><span style="display:inline-block;transform:scaleX(0.95);transform-origin:right">0,00</span></div>
<div class="dr" style="top:703.75px;background:#f4f4f4"></div>
<div class="dt" style="left:600.5px;top:707.35px;transform:scaleX(0.905);transform-origin:left;">25.11.2024 14:33:00</div>
<svg class="a" style="left:817px;top:708.75px" width="14" height="14" viewBox="0 0 14 14"><g stroke-linecap="round"><path d="M2 2 L12 12 M12 2 L2 12" stroke="#c84a4a" stroke-width="3.6"/><path d="M2 2 L12 12 M12 2 L2 12" stroke="#e77272" stroke-width="1.8"/></g></svg>
<div class="dt" style="left:874px;top:707.35px;transform:scaleX(0.92);transform-origin:left;">Адміністратор</div>
<div class="dt" style="left:1062px;top:707.35px;transform:scaleX(0.92);transform-origin:left;">Expert Solution</div>
<div class="dt" style="left:1016.0px;width:300px;top:707.35px;text-align:right;"><span style="display:inline-block;transform:scaleX(0.95);transform-origin:right">0,00</span></div>
<div class="dt" style="left:1091.0px;width:300px;top:707.35px;text-align:right;"><span style="display:inline-block;transform:scaleX(0.95);transform-origin:right">0,00</span></div>
<div class="dt" style="left:1166.5px;width:300px;top:707.35px;text-align:right;"><span style="display:inline-block;transform:scaleX(0.95);transform-origin:right">0,00</span></div>
<div class="dt" style="left:1241.5px;width:300px;top:707.35px;text-align:right;"><span style="display:inline-block;transform:scaleX(0.95);transform-origin:right">0,00</span></div>
<div class="dt" style="left:1320.5px;width:300px;top:707.35px;text-align:right;"><span style="display:inline-block;transform:scaleX(0.95);transform-origin:right">0,00</span></div>
<div class="dt" style="left:600.5px;top:729.94px;transform:scaleX(0.905);transform-origin:left;">25.11.2024 14:33:00</div>
<svg class="a" style="left:817px;top:731.34px" width="14" height="14" viewBox="0 0 14 14"><g stroke-linecap="round"><path d="M2 2 L12 12 M12 2 L2 12" stroke="#c84a4a" stroke-width="3.6"/><path d="M2 2 L12 12 M12 2 L2 12" stroke="#e77272" stroke-width="1.8"/></g></svg>
<div class="dt" style="left:874px;top:729.94px;transform:scaleX(0.92);transform-origin:left;">Адміністратор</div>
<div class="dt" style="left:1062px;top:729.94px;transform:scaleX(0.92);transform-origin:left;">Expert Solution</div>
<div class="dt" style="left:1016.0px;width:300px;top:729.94px;text-align:right;"><span style="display:inline-block;transform:scaleX(0.88);transform-origin:right">991,00</span></div>
<div class="dt" style="left:1091.0px;width:300px;top:729.94px;text-align:right;"><span style="display:inline-block;transform:scaleX(0.95);transform-origin:right">0,00</span></div>
<div class="dt" style="left:1166.5px;width:300px;top:729.94px;text-align:right;"><span style="display:inline-block;transform:scaleX(0.95);transform-origin:right">0,00</span></div>
<div class="dt" style="left:1241.5px;width:300px;top:729.94px;text-align:right;"><span style="display:inline-block;transform:scaleX(0.95);transform-origin:right">0,00</span></div>
<div class="dt" style="left:1320.5px;width:300px;top:729.94px;text-align:right;"><span style="display:inline-block;transform:scaleX(0.95);transform-origin:right">0,00</span></div>
<div class="dr" style="top:748.93px;background:#f4f4f4"></div>
<div class="dt" style="left:600.5px;top:752.53px;transform:scaleX(0.905);transform-origin:left;">11.10.2024 12:40:00</div>
<svg class="a" style="left:817px;top:753.93px" width="14" height="14" viewBox="0 0 14 14"><g stroke-linecap="round"><path d="M2 2 L12 12 M12 2 L2 12" stroke="#c84a4a" stroke-width="3.6"/><path d="M2 2 L12 12 M12 2 L2 12" stroke="#e77272" stroke-width="1.8"/></g></svg>
<div class="dt" style="left:874px;top:752.53px;transform:scaleX(0.92);transform-origin:left;">Касир</div>
<div class="dt" style="left:1062px;top:752.53px;transform:scaleX(0.92);transform-origin:left;">Expert Solution</div>
<div class="dt" style="left:1016.0px;width:300px;top:752.53px;text-align:right;"><span style="display:inline-block;transform:scaleX(0.95);transform-origin:right">0,00</span></div>
<div class="dt" style="left:1091.0px;width:300px;top:752.53px;text-align:right;"><span style="display:inline-block;transform:scaleX(0.95);transform-origin:right">0,00</span></div>
<div class="dt" style="left:1166.5px;width:300px;top:752.53px;text-align:right;"><span style="display:inline-block;transform:scaleX(0.95);transform-origin:right">0,00</span></div>
<div class="dt" style="left:1241.5px;width:300px;top:752.53px;text-align:right;"><span style="display:inline-block;transform:scaleX(0.95);transform-origin:right">0,00</span></div>
<div class="dt" style="left:1320.5px;width:300px;top:752.53px;text-align:right;"><span style="display:inline-block;transform:scaleX(0.95);transform-origin:right">0,00</span></div>
<div class="rt" style="left:591px;top:778px;font-size:15px;line-height:16px;color:#777;letter-spacing:-0.1px">www.servio.com.ua</div>
</body></html>
